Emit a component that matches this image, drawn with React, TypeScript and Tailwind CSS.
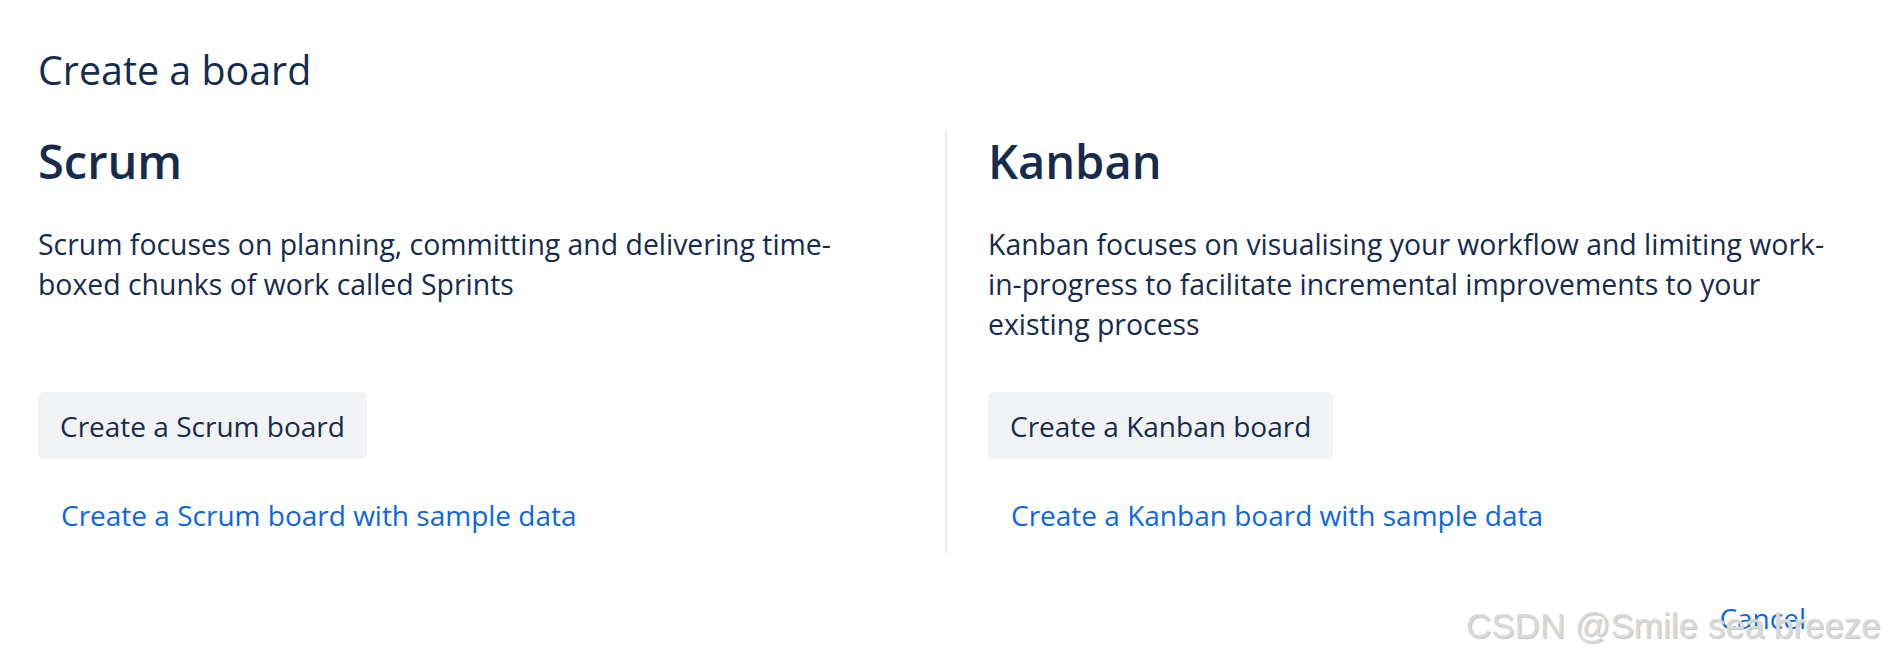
import { useState } from "react";

const boards = [
  {
    name: "Scrum",
    text: "Scrum focuses on planning, committing and delivering time-boxed chunks of work called Sprints",
    button: "Create a Scrum board",
    sample: "Create a Scrum board with sample data",
  },
  {
    name: "Kanban",
    text: "Kanban focuses on visualising your workflow and limiting work-in-progress to facilitate incremental improvements to your existing process",
    button: "Create a Kanban board",
    sample: "Create a Kanban board with sample data",
  },
];

export default function App() {
  const [picked, setPicked] = useState<string | null>(null);

  return (
    <div
      className="relative w-[1884px] h-[662px] overflow-hidden bg-white text-[#172b4d]"
      style={{ fontFamily: '"Open Sans", "Noto Sans", sans-serif' }}
    >
      <div className="px-[38px] pt-[46px]">
        <h1 className="text-[39.4px] leading-[48px] font-normal">Create a board</h1>

        <div className="flex mt-[36px]">
          {boards.map((b, i) => (
            <div
              key={b.name}
              className={`flex flex-col items-start pb-[18px] ${
                i === 0 ? "w-[907px] shrink-0 pr-[44px]" : "flex-1 pl-[41px] pr-[8px] border-l-2 border-[#ebecf0]"
              }`}
            >
              <h2 className="text-[47px] leading-[62px] font-semibold">{b.name}</h2>
              <p className="mt-[32px] min-h-[120px] text-[28.4px] leading-[40px]">{b.text}</p>
              <button
                onClick={() => setPicked(b.name)}
                className={`mt-[48px] h-[67px] px-[22px] rounded-[6px] text-[28px] leading-[40px] text-[#172b4d] ${
                  picked === b.name ? "bg-[#e4e6ea]" : "bg-[#f1f2f4]"
                }`}
              >
                {b.button}
              </button>
              <a href="#" className="mt-[36px] px-[23px] text-[28px] leading-[40px] text-[#0c66e4]">
                {b.sample}
              </a>
            </div>
          ))}
        </div>

        <div className="flex justify-end mt-[45px] pr-[40px]">
          <button className="text-[28px] leading-[40px] text-[#0c66e4]">Cancel</button>
        </div>
      </div>

      {/* watermark */}
      <div
        className="absolute left-[1466px] top-[604px] text-[35px] leading-[44px] text-[#d9d9d9] whitespace-nowrap pointer-events-none"
        style={{ fontFamily: '"Liberation Sans", Arial, sans-serif', textShadow: "1px 1px 1px #c4c4c4" }}
      >
        CSDN @Smile sea breeze
      </div>
    </div>
  );
}
